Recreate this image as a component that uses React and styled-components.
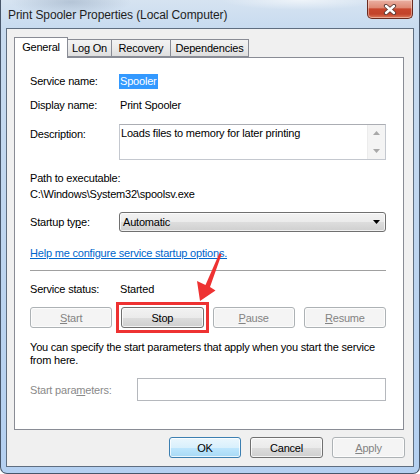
import React from "react";
import styled, { createGlobalStyle } from "styled-components";

const GlobalStyle = createGlobalStyle`
  html, body {
    margin: 0;
    padding: 0;
    background: #ffffff;
  }
  body {
    font-family: "Liberation Sans", Arial, sans-serif;
    font-size: 11px;
    letter-spacing: -0.2px;
    color: #000;
  }
`;

const Window = styled.div`
  position: relative;
  box-sizing: border-box;
  width: 420px;
  height: 474px;
  padding: 0 5px 6px;
  border: 1px solid #47566a;
  border-top: none;
  border-radius: 0 0 7px 7px;
  background:
    radial-gradient(ellipse 60px 14px at 70px 2px, rgba(120, 140, 165, 0.35), transparent),
    radial-gradient(ellipse 80px 10px at 300px 0px, rgba(255, 255, 255, 0.6), transparent),
    linear-gradient(180deg, #d6e3f1 0px, #c8dbef 28px, #bcd4ef 60%, #b4d0f1 100%);
  display: flex;
  flex-direction: column;
`;

const TitleBar = styled.div`
  height: 28px;
  display: flex;
  justify-content: space-between;
  align-items: flex-start;
  padding-left: 2px;
`;

const Title = styled.div`
  font-size: 12px;
  letter-spacing: -0.1px;
  line-height: 31px;
  color: #1e1e1e;
  white-space: nowrap;
`;

const CloseButton = styled.div`
  box-sizing: border-box;
  width: 46px;
  height: 19px;
  margin-right: 1px;
  border: 1px solid #6a2b20;
  border-top: none;
  border-radius: 0 0 5px 5px;
  background: linear-gradient(180deg, #eab0a3 0%, #df8b76 42%, #c8472e 50%, #c2432b 78%, #dd7b5c 100%);
  box-shadow: inset 0 0 0 1px rgba(255, 235, 225, 0.45);
  display: flex;
  align-items: center;
  justify-content: center;
`;

const Client = styled.div`
  flex: 1;
  box-sizing: border-box;
  border: 1px solid #5f6e80;
  background: #f0f0f0;
  padding: 0 8px 0 7px;
  display: flex;
  flex-direction: column;
`;

const TabRow = styled.div`
  position: relative;
  z-index: 1;
  margin-top: 8px;
  margin-bottom: -1px;
  height: 21px;
  display: flex;
  align-items: flex-end;
`;

const Tab = styled.div`
  box-sizing: border-box;
  width: ${({ $w }) => $w}px;
  height: ${({ $active }) => ($active ? 21 : 18)}px;
  margin-bottom: ${({ $active }) => ($active ? 0 : 1)}px;
  margin-left: ${({ $first }) => ($first ? 0 : -1)}px;
  border: 1px solid #898c95;
  border-bottom: ${({ $active }) => ($active ? "none" : "1px solid #898c95")};
  background: ${({ $active }) =>
    $active ? "#ffffff" : "linear-gradient(180deg, #f3f3f3 0%, #ebebeb 50%, #dedede 100%)"};
  display: flex;
  align-items: center;
  justify-content: center;
  padding-bottom: ${({ $active }) => ($active ? 2 : 0)}px;
  white-space: nowrap;
`;

const Panel = styled.div`
  box-sizing: border-box;
  width: 390px;
  height: 373px;
  border: 1px solid #898c95;
  background: #ffffff;
  padding: 0 17px 0 15px;
  display: flex;
  flex-direction: column;
`;

const Row = styled.div`
  display: flex;
  align-items: ${({ $top }) => ($top ? "flex-start" : "center")};
  height: ${({ $h }) => $h || 16}px;
  margin-top: ${({ $mt }) => $mt || 0}px;
  white-space: nowrap;
  color: ${({ $dim }) => ($dim ? "#8a8a8a" : "#000")};
`;

const Label = styled.div`
  width: ${({ $w }) => $w || 89}px;
  flex-shrink: 0;
  padding-top: ${({ $pt }) => $pt || 0}px;
`;

const Selected = styled.span`
  background: #3399ff;
  color: #fff;
  padding: 1px 1px 1px 1px;
  line-height: 13px;
`;

const Value = styled.span`
  padding-left: 1px;
`;

const TextArea = styled.div`
  flex: 1;
  box-sizing: border-box;
  height: 36px;
  border: 1px solid #c4c8cf;
  border-top-color: #abadb3;
  display: flex;
`;

const AreaText = styled.div`
  flex: 1;
  padding: 2px 0 0 1px;
`;

const ScrollBar = styled.div`
  width: 17px;
  background: #f4f4f4;
  border-left: 1px solid #ececec;
  display: flex;
  flex-direction: column;
  justify-content: space-between;
  align-items: center;
  padding: 6px 0 6px;
`;

const Select = styled.div`
  flex: 1;
  box-sizing: border-box;
  height: 20px;
  border: 1px solid #707070;
  border-radius: 3px;
  background: linear-gradient(180deg, #f2f2f2 0%, #ebebeb 50%, #dddddd 51%, #cfcfcf 100%);
  box-shadow: inset 0 0 0 1px rgba(255, 255, 255, 0.7);
  display: flex;
  align-items: center;
  justify-content: space-between;
  padding: 0 5px 0 3px;
`;

const Link = styled.a`
  color: #0066cc;
  text-decoration: underline;
`;

const Separator = styled.div`
  height: 1px;
  margin-top: 9px;
  background: #a0a0a0;
`;

const ButtonGrid = styled.div`
  display: grid;
  grid-template-columns: repeat(4, 1fr);
  column-gap: 9px;
  margin-top: 10px;
  height: 21px;
`;

const Button = styled.div`
  box-sizing: border-box;
  height: 21px;
  width: ${({ $w }) => ($w ? `${$w}px` : "auto")};
  border: 1px solid ${({ $disabled, $default }) => ($disabled ? "#adb2b5" : $default ? "#3c7fb1" : "#707070")};
  border-radius: 3px;
  background: ${({ $disabled, $default }) =>
    $disabled
      ? "#f4f4f4"
      : $default
      ? "linear-gradient(180deg, #eaf6fd 0%, #d9f0fc 50%, #bee6fd 51%, #a7d9f5 100%)"
      : "linear-gradient(180deg, #f2f2f2 0%, #ebebeb 50%, #dddddd 51%, #cfcfcf 100%)"};
  box-shadow: inset 0 0 0 1px ${({ $disabled }) => ($disabled ? "#fcfcfc" : "rgba(255,255,255,0.75)")};
  color: ${({ $disabled }) => ($disabled ? "#838383" : "#000")};
  display: flex;
  align-items: center;
  justify-content: center;
`;

const Paragraph = styled.div`
  margin-top: 13px;
  line-height: 13px;
  white-space: nowrap;
`;

const Input = styled.div`
  flex: 1;
  box-sizing: border-box;
  height: 23px;
  border: 1px solid #b5b8bd;
  background: #fff;
`;

const DialogButtons = styled.div`
  display: flex;
  justify-content: flex-end;
  gap: 9px;
  margin-top: 7px;
`;

const Highlight = styled.div`
  position: absolute;
  left: 115px;
  top: 302px;
  width: 93px;
  height: 31px;
  box-sizing: border-box;
  border: 3px solid #ee3232;
  pointer-events: none;
`;

const ArrowLayer = styled.svg`
  position: absolute;
  left: 0;
  top: 0;
  pointer-events: none;
`;

const Tri = ({ up, color = "#a8a8a8" }) => (
  <svg width="7" height="4" viewBox="0 0 7 4">
    <path d={up ? "M0 4 L3.5 0 L7 4 Z" : "M0 0 L7 0 L3.5 4 Z"} fill={color} />
  </svg>
);

export default function App() {
  return (
    <>
      <GlobalStyle />
      <Window>
        <TitleBar>
          <Title>Print Spooler Properties (Local Computer)</Title>
          <CloseButton>
            <svg width="14" height="11" viewBox="0 0 14 11">
              <path d="M3 2 L11 9 M11 2 L3 9" stroke="#5a3a35" strokeWidth="4.2" strokeLinecap="round" />
              <path d="M3 2 L11 9 M11 2 L3 9" stroke="#ffffff" strokeWidth="2.4" strokeLinecap="round" />
            </svg>
          </CloseButton>
        </TitleBar>
        <Client>
          <TabRow>
            <Tab $w={54} $active $first>General</Tab>
            <Tab $w={45}>Log On</Tab>
            <Tab $w={60}>Recovery</Tab>
            <Tab $w={79}>Dependencies</Tab>
          </TabRow>
          <Panel>
            <Row $mt={15}>
              <Label>Service name:</Label>
              <Selected>Spooler</Selected>
            </Row>
            <Row $mt={8}>
              <Label>Display name:</Label>
              <Value>Print Spooler</Value>
            </Row>
            <Row $mt={11} $h={36} $top>
              <Label $pt={4}>Description:</Label>
              <TextArea>
                <AreaText>Loads files to memory for later printing</AreaText>
                <ScrollBar>
                  <Tri up />
                  <Tri />
                </ScrollBar>
              </TextArea>
            </Row>
            <Row $mt={10}>Path to executable:</Row>
            <Row>C:\Windows\System32\spoolsv.exe</Row>
            <Row $mt={10} $h={20}>
              <Label>
                Startup ty<u>p</u>e:
              </Label>
              <Select>
                <span>Automatic</span>
                <Tri color="#000" />
              </Select>
            </Row>
            <Row $mt={13}>
              <Link>Help me configure service startup options.</Link>
            </Row>
            <Separator />
            <Row $mt={10}>
              <Label>Service status:</Label>
              <Value>Started</Value>
            </Row>
            <ButtonGrid>
              <Button $disabled>
                <span>
                  <u>S</u>tart
                </span>
              </Button>
              <Button>Stop</Button>
              <Button $disabled>
                <span>
                  <u>P</u>ause
                </span>
              </Button>
              <Button $disabled>
                <span>
                  <u>R</u>esume
                </span>
              </Button>
            </ButtonGrid>
            <Paragraph>
              You can specify the start parameters that apply when you start the service
              <br />
              from here.
            </Paragraph>
            <Row $mt={11} $h={23} $dim>
              <Label $w={107}>
                Start para<u>m</u>eters:
              </Label>
              <Input />
            </Row>
          </Panel>
          <DialogButtons>
            <Button $w={72} $default>OK</Button>
            <Button $w={73}>Cancel</Button>
            <Button $w={73} $disabled>
              <span>
                <u>A</u>pply
              </span>
            </Button>
          </DialogButtons>
        </Client>
        <Highlight />
        <ArrowLayer width="420" height="474" viewBox="0 0 420 474">
          <path
            d="M218.5 253 L220.5 254.5 L209 287 L214.5 290.5 L199 301 L196 281 L204.5 285 Z"
            fill="#ee3232"
          />
        </ArrowLayer>
      </Window>
    </>
  );
}
